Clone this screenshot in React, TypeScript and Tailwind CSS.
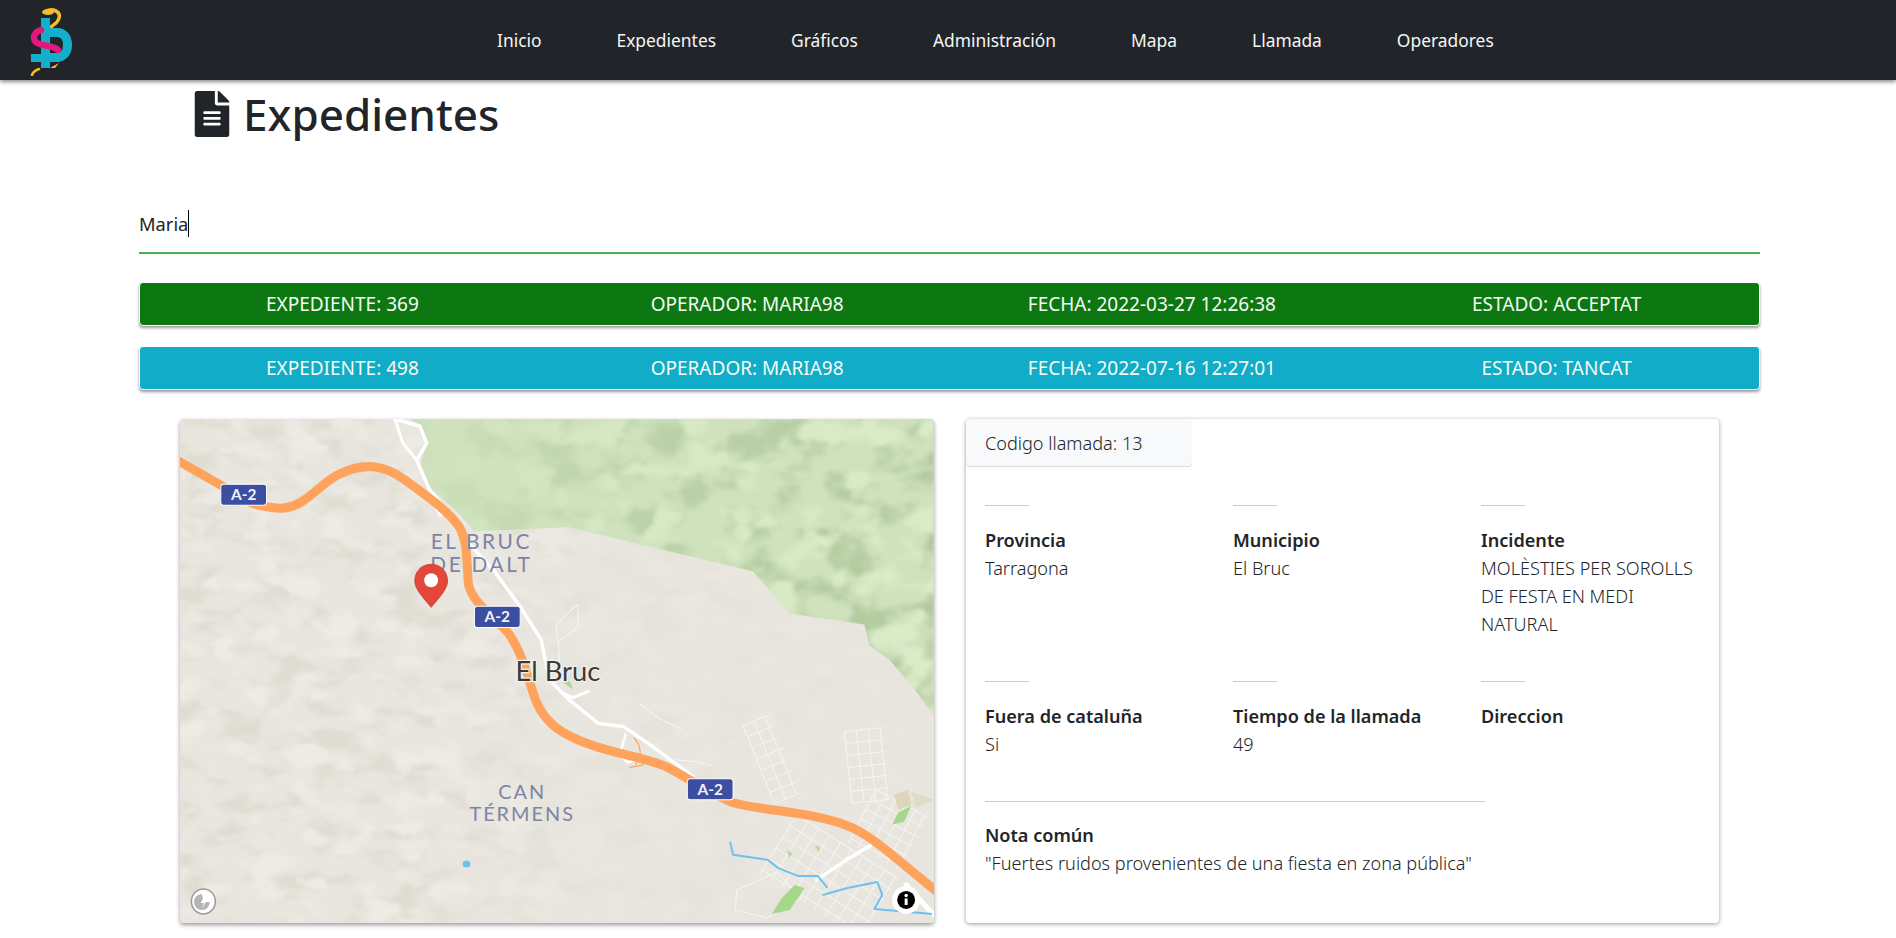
import { FaFileAlt } from 'react-icons/fa'

const links = ['Inicio', 'Expedientes', 'Gráficos', 'Administración', 'Mapa', 'Llamada', 'Operadores']

const rows = [
  { id: 369, date: '2022-03-27 12:26:38', state: 'ACCEPTAT', color: 'bg-[#0d7811]' },
  { id: 498, date: '2022-07-16 12:27:01', state: 'TANCAT', color: 'bg-[#11acc7]' },
]

const mainRoad =
  'M-5 40 L41 66 C60 80 75 88 100 89 C125 90 140 64 160 55 C185 43 205 46 225 60 C250 78 270 92 281 108 C290 125 288 145 290 165 C294 185 320 200 331 215 C345 235 350 260 358 282 C368 305 385 315 410 324 C440 335 470 338 491 348 C510 358 530 372 556 383 C590 392 640 392 676 408 C700 420 715 435 765 475'

function Logo() {
  return (
    <svg width="46" height="72" viewBox="0 0 46 72" fill="none">
      <path d="M16 8 C24 3 32 8 30 14 C29 19 25 20 22 23" stroke="#f4bd2a" strokeWidth="3.5" strokeLinecap="round" />
      <ellipse cx="19" cy="8" rx="6" ry="3" fill="#f4bd2a" />
      <rect x="12" y="14" width="9" height="50" fill="#14adca" />
      <rect x="2" y="50" width="29" height="8" fill="#14adca" />
      <path d="M21 28.5 H28 C35 28.5 38.5 34 38.5 41 C38.5 49 34 53.5 27 53.5 H21" stroke="#14adca" strokeWidth="9" />
      <path d="M12 26 C5 28 4 33 6 37 C10 43 22 40 29 46" stroke="#e2197c" strokeWidth="6.5" strokeLinecap="round" />
      <path d="M3 71 C4 68 7 66 10 65" stroke="#f4bd2a" strokeWidth="2.5" strokeLinecap="round" />
      <path d="M21 64 L30 59 L26 64 Z" fill="#f4bd2a" />
    </svg>
  )
}

function Shield({ x, y }: { x: number; y: number }) {
  return (
    <g>
      <rect x={x} y={y} width="46" height="21" rx="3" fill="#3c4ea0" stroke="#ffffff" strokeWidth="1" />
      <text x={x + 23} y={y + 16} textAnchor="middle" fontFamily="Lato, sans-serif" fontWeight="700" fontSize="15.5" fill="#f2f3fa">
        A-2
      </text>
    </g>
  )
}

// calles finas de los pueblos, en rejilla girada
function Streets({ x, y, w, h, angle, step }: { x: number; y: number; w: number; h: number; angle: number; step: number }) {
  const across = Array.from({ length: Math.floor(h / step) + 1 }, (_, i) => i * step)
  const down = Array.from({ length: Math.floor(w / step) + 1 }, (_, i) => i * step)
  return (
    <g transform={`translate(${x} ${y}) rotate(${angle})`} stroke="#f6f5f1" strokeWidth="0.9">
      {across.map((v) => (
        <line key={`a${v}`} x1="0" y1={v} x2={w} y2={v} />
      ))}
      {down.map((v) => (
        <line key={`d${v}`} x1={v} y1="0" x2={v} y2={h} />
      ))}
    </g>
  )
}

function MapView() {
  const green = 'M231 0 H758 V297 L741 273 L713 240 L693 226 L688 205 L613 194 L576 152 L391 108 L296 112 L278 92 L251 68 L241 48 L248 24 L243 7 Z'
  return (
    <svg className="block w-full h-full" viewBox="0 0 758 503" preserveAspectRatio="none">
      <defs>
        <filter id="terrainDark" x="0" y="0" width="100%" height="100%" colorInterpolationFilters="sRGB">
          <feTurbulence type="fractalNoise" baseFrequency="0.024 0.042" numOctaves="3" seed="7" />
          <feColorMatrix values="0 0 0 0 0.875  0 0 0 0 0.865  0 0 0 0 0.825  5 0 0 0 -2.4" />
          <feGaussianBlur stdDeviation="1.2" />
        </filter>
        <filter id="terrainLight" x="0" y="0" width="100%" height="100%" colorInterpolationFilters="sRGB">
          <feTurbulence type="fractalNoise" baseFrequency="0.028 0.046" numOctaves="3" seed="31" />
          <feColorMatrix values="0 0 0 0 0.93  0 0 0 0 0.92  0 0 0 0 0.89  5 0 0 0 -2.5" />
          <feGaussianBlur stdDeviation="1.2" />
        </filter>
        <filter id="relief" x="0" y="0" width="100%" height="100%" colorInterpolationFilters="sRGB">
          <feTurbulence type="fractalNoise" baseFrequency="0.02 0.028" numOctaves="4" seed="21" />
          <feColorMatrix values="0 0 0 0 0.70  0 0 0 0 0.79  0 0 0 0 0.62  5 0 0 0 -2.3" />
          <feGaussianBlur stdDeviation="1.5" />
        </filter>
        <filter id="reliefLight" x="0" y="0" width="100%" height="100%" colorInterpolationFilters="sRGB">
          <feTurbulence type="fractalNoise" baseFrequency="0.024 0.034" numOctaves="3" seed="5" />
          <feColorMatrix values="0 0 0 0 0.85  0 0 0 0 0.92  0 0 0 0 0.78  6 0 0 0 -3" />
          <feGaussianBlur stdDeviation="1.5" />
        </filter>
        <linearGradient id="fade" x1="0" x2="1" y1="0" y2="0.05">
          <stop offset="0" stopColor="#fff" />
          <stop offset="0.38" stopColor="#fff" />
          <stop offset="0.58" stopColor="#555" />
          <stop offset="1" stopColor="#1c1c1c" />
        </linearGradient>
        <linearGradient id="fadeGreen" x1="0" x2="1" y1="0" y2="0">
          <stop offset="0.32" stopColor="#222" />
          <stop offset="0.62" stopColor="#aaa" />
          <stop offset="1" stopColor="#fff" />
        </linearGradient>
        <mask id="terrainMask">
          <rect width="758" height="503" fill="url(#fade)" />
        </mask>
        <mask id="greenMask">
          <rect width="758" height="503" fill="url(#fadeGreen)" />
        </mask>
        <clipPath id="greenClip">
          <path d={green} />
        </clipPath>
      </defs>

      <rect width="758" height="503" fill="#e9e6e0" />
      <g mask="url(#terrainMask)">
        <rect width="758" height="503" filter="url(#terrainDark)" />
        <rect width="758" height="503" filter="url(#terrainLight)" />
      </g>
      <path d={green} fill="#cfe2bd" />
      <g clipPath="url(#greenClip)" mask="url(#greenMask)">
        <rect width="758" height="503" filter="url(#relief)" />
        <rect width="758" height="503" filter="url(#reliefLight)" />
      </g>

      <g fill="none" stroke="#f6f5f1" strokeWidth="1">
        <path d="M505 310 L480 298 L462 284 M497 340 L520 342 L536 346" />
        <path d="M378 205 L400 185 L400 208 L380 222 Z M380 222 L384 268" />
      </g>
      <Streets x={566} y={306} w={30} h={84} angle={-22} step={12} />
      <Streets x={668} y={312} w={38} h={72} angle={-6} step={12} />
      <Streets x={620} y={395} w={120} h={70} angle={32} step={13} />
      <Streets x={700} y={370} w={60} h={60} angle={28} step={11} />
      <path d="M560 470 L600 452 L625 478 L590 498 L558 490 Z" fill="none" stroke="#f6f5f1" strokeWidth="1" />

      <path d="M318 210 L323 205 L330 212 Z" fill="#ddd9b8" />
      <path d="M718 375 L732 370 L735 385 L722 390 Z" fill="#dcd7b8" />
      <path d="M735 372 L758 380 L740 388 Z" fill="#dfdcc4" />
      <path d="M722 393 L735 386 L728 402 L716 405 Z" fill="#a5d88a" />
      <path d="M605 478 L618 465 L628 468 L613 490 L595 494 Z" fill="#a5d88a" />
      <path d="M638 425 L644 428 L642 433 Z M610 430 L616 434 L612 438 Z" fill="#b5dc9e" />
      <path d="M385 262 L392 262 L395 270 Z" fill="#a5d88a" />

      <g fill="none" stroke="#ffffff" strokeLinejoin="round" strokeLinecap="round">
        <path d="M216 0 L241 7 L248 24 L238 41 L251 71 L271 94" strokeWidth="3.5" />
        <path d="M216 0 L224 24 L238 41" strokeWidth="3" />
        <path d="M250 78 L262 96" strokeWidth="3" />
        <path d="M291 125 L316 152 L341 186 L363 220 L371 260 L391 280 L421 304 L446 307 L471 324 L516 357" strokeWidth="3.5" />
        <path d="M382 272 L395 278 L410 272" strokeWidth="3" />
        <path d="M448 315 L442 335 L450 343 L465 337" strokeWidth="2.5" />
        <path d="M640 460 L670 440 L695 425" strokeWidth="3.5" />
        <path d="M730 465 L758 495" strokeWidth="5" />
      </g>

      <path d={mainRoad} fill="none" stroke="#ffa35c" strokeWidth="9" strokeLinejoin="round" />
      <path d="M456 318 Q468 330 458 345 M466 345 L452 348" fill="none" stroke="#ffa35c" strokeWidth="1.2" />

      <g fill="none" stroke="#6cc1ee" strokeWidth="2" strokeLinejoin="round">
        <path d="M553 422 L556 435 L591 440 L601 448 L621 456 L641 456 L651 468" />
        <path d="M646 475 L671 468 L701 462 L706 475 L698 489 L756 494" />
      </g>
      <ellipse cx="288" cy="444" rx="4" ry="3.5" fill="#6cc1ee" />

      <Shield x={41} y={65} />
      <Shield x={296} y={187} />
      <Shield x={510} y={359} />

      <g fontFamily="Lato, sans-serif" fill="#7e84a3" textAnchor="middle">
        <g fontSize="21" letterSpacing="2.6">
          <text x="303" y="130">EL BRUC</text>
          <text x="303" y="153">DE DALT</text>
        </g>
        <g fontSize="20" letterSpacing="2">
          <text x="344" y="379">CAN</text>
          <text x="344" y="401">TÉRMENS</text>
        </g>
      </g>
      <text x="380" y="261" textAnchor="middle" fontFamily="Lato, sans-serif" fontSize="27.5" fill="#3a3a3a" stroke="#f3f1ec" strokeWidth="2.5" paintOrder="stroke">
        El Bruc
      </text>

      <path d="M252.5 145 C242 145 236 153 236 162 C236 170 246 180 252.5 188 C259 180 269 170 269 162 C269 153 263 145 252.5 145 Z" fill="#e4473a" stroke="#c9382d" strokeWidth="0.8" />
      <ellipse cx="252.5" cy="161" rx="7" ry="7" fill="#ffffff" />

      <ellipse cx="23.5" cy="481.5" rx="12" ry="12.5" fill="#ffffff" stroke="#9a9a9a" strokeWidth="1.5" />
      <path d="M22 474 A8 8 0 1 0 30 482 L24 482 Z" fill="#b5b5b5" />
      <path d="M25 474 L21 483 L24 483 L22 489 L27 480 L24 480 Z" fill="#ffffff" />

      <circle cx="730" cy="480" r="14" fill="#ffffff" />
      <circle cx="730" cy="480" r="9" fill="#000000" />
      <circle cx="730" cy="475.5" r="1.7" fill="#ffffff" />
      <rect x="728.5" y="478.5" width="3" height="6.5" fill="#ffffff" />
    </svg>
  )
}

function Field({ label, children, className = '' }: { label: string; children?: React.ReactNode; className?: string }) {
  return (
    <div className={className}>
      <hr className="w-[44px] border-0 border-t border-[#c9cacb]" />
      <p className="mt-[20px] font-semibold text-[#212529]">{label}</p>
      <p className="text-[#212529] font-light">{children}</p>
    </div>
  )
}

export default function App() {
  return (
    <div className="min-h-[938px] bg-white text-[18.1px] leading-[28px] text-[#212529] font-['Noto_Sans','Open_Sans',sans-serif]">
      <nav className="relative z-10 flex h-[80px] items-center bg-[#212529] pl-[29px] shadow-[0_2px_4px_rgba(0,0,0,0.45)]">
        <div className="w-[468px]">
          <Logo />
        </div>
        <ul className="flex gap-[75px] text-[17.4px] text-[#f5f5f5]">
          {links.map((l) => (
            <li key={l}>{l}</li>
          ))}
        </ul>
      </nav>

      <div className="pl-[139px] pr-[136px]">
        <div className="flex items-center gap-[13px] pl-[55px] pt-[9px]">
          <FaFileAlt className="h-[46px] w-[36px] text-[#212529]" />
          <h1 className="text-[44px] leading-[50px] font-medium">Expedientes</h1>
        </div>

        <div className="mt-[60px] flex h-[55px] items-start border-b-2 border-[#4caf50] pt-[11px] text-[18.3px] text-[#212529]">
          <span>Maria</span>
          <span className="h-[27px] w-px bg-black" />
        </div>

        <div className="mt-[28px] flex flex-col gap-[20px]">
          {rows.map((r) => (
            <div
              key={r.id}
              className={`grid h-[44px] grid-cols-4 items-center rounded-[4px] border border-white text-center text-[19px] text-[#f5fbf5] shadow-[0_2px_3px_rgba(0,0,0,0.4)] ${r.color}`}
            >
              <span>EXPEDIENTE: {r.id}</span>
              <span>OPERADOR: MARIA98</span>
              <span>FECHA: {r.date}</span>
              <span>ESTADO: {r.state}</span>
            </div>
          ))}
        </div>

        <div className="mt-[29px] ml-[41px] flex gap-[32px]">
          <div className="h-[504px] w-[754px] overflow-hidden rounded-[4px] shadow-[0_2px_4px_rgba(0,0,0,0.4)]">
            <MapView />
          </div>

          <div className="h-[504px] w-[753px] rounded-[4px] shadow-[0_1px_4px_rgba(0,0,0,0.4)]">
            <div className="flex h-[47px] w-[226px] items-center rounded-[4px] bg-[#f8f9fa] pl-[19px] font-light shadow-[0_1px_1px_rgba(0,0,0,0.15)]">
              Codigo llamada: 13
            </div>

            <div className="mt-[39px] grid grid-cols-[248px_248px_1fr] pl-[19px] pr-[20px]">
              <Field label="Provincia" className="h-[176px]">Tarragona</Field>
              <Field label="Municipio">El Bruc</Field>
              <Field label="Incidente">MOLÈSTIES PER SOROLLS DE FESTA EN MEDI NATURAL</Field>
              <Field label="Fuera de cataluña" className="h-[120px]">Si</Field>
              <Field label="Tiempo de la llamada">49</Field>
              <Field label="Direccion" />
            </div>

            <div className="ml-[19px] w-[500px]">
              <hr className="border-0 border-t border-[#c9cacb]" />
              <p className="mt-[19px] font-semibold">Nota común</p>
              <p className="font-light whitespace-nowrap">"Fuertes ruidos provenientes de una fiesta en zona pública"</p>
            </div>
          </div>
        </div>
      </div>
    </div>
  )
}
